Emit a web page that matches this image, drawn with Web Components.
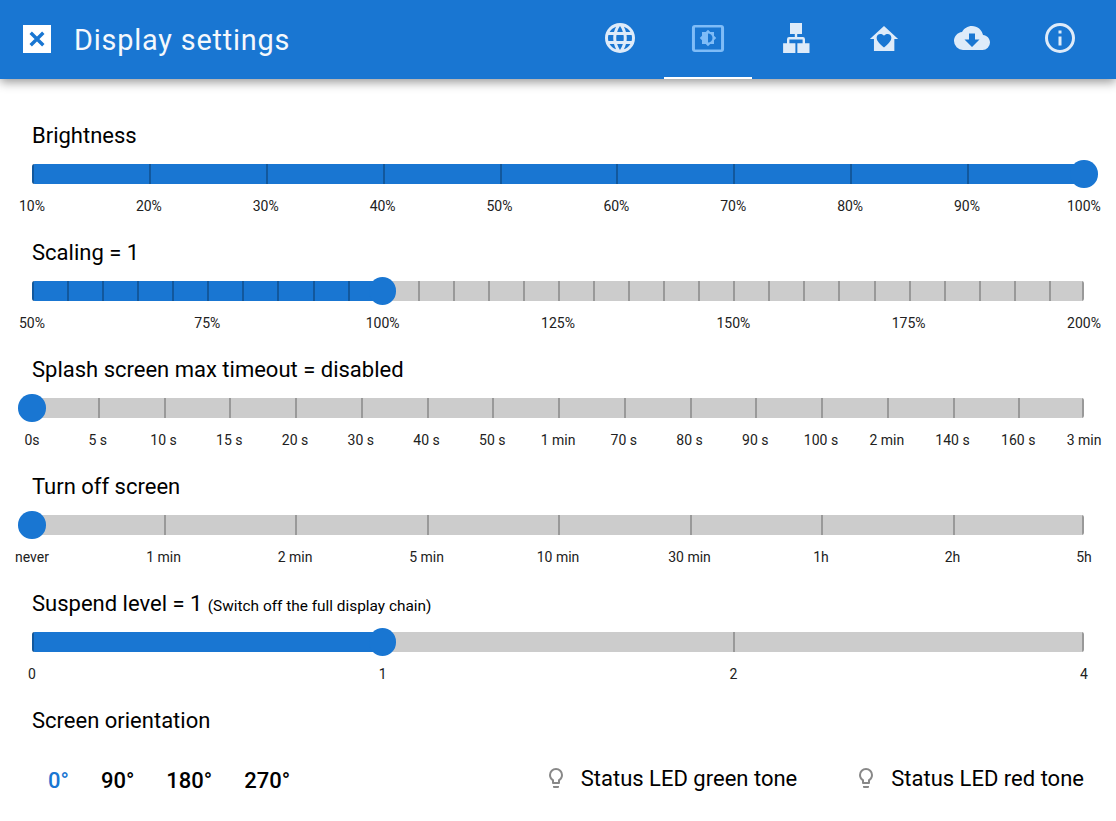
<!DOCTYPE html>
<html>
<head>
<meta charset="utf-8">
<title>Display settings</title>
<style>
  html, body { margin: 0; padding: 0; background: #fff; }
  body { font-family: Roboto, "Liberation Sans", sans-serif; color: #000; }
</style>
</head>
<body>
<settings-page>
  <top-bar slot="bar" heading="Display settings"></top-bar>

  <range-slider title-text="Brightness" value="9" ticks="9"
    labels="10%,20%,30%,40%,50%,60%,70%,80%,90%,100%"></range-slider>

  <range-slider title-text="Scaling = 1" value="10" ticks="30"
    labels="50%,75%,100%,125%,150%,175%,200%"></range-slider>

  <range-slider title-text="Splash screen max timeout = disabled" value="0" ticks="16"
    labels="0s,5 s,10 s,15 s,20 s,30 s,40 s,50 s,1 min,70 s,80 s,90 s,100 s,2 min,140 s,160 s,3 min"></range-slider>

  <range-slider title-text="Turn off screen" value="0" ticks="8"
    labels="never,1 min,2 min,5 min,10 min,30 min,1h,2h,5h"></range-slider>

  <range-slider title-text="Suspend level = 1" note="(Switch off the full display chain)" value="1" ticks="3"
    labels="0,1,2,4"></range-slider>

  <bottom-row></bottom-row>
</settings-page>

<script>
const ICONS = {
  web: `<path d="M16.36,14C16.44,13.34 16.5,12.68 16.5,12C16.5,11.32 16.44,10.66 16.36,10H19.74C19.9,10.64 20,11.31 20,12C20,12.69 19.9,13.36 19.74,14M14.59,19.56C15.19,18.45 15.65,17.25 15.97,16H18.92C17.96,17.65 16.43,18.93 14.59,19.56M14.34,14H9.66C9.56,13.34 9.5,12.68 9.5,12C9.5,11.32 9.56,10.65 9.66,10H14.34C14.43,10.65 14.5,11.32 14.5,12C14.5,12.68 14.43,13.34 14.34,14M12,19.96C11.17,18.76 10.5,17.43 10.09,16H13.91C13.5,17.43 12.83,18.76 12,19.96M8,8H5.08C6.03,6.34 7.57,5.06 9.4,4.44C8.8,5.55 8.35,6.75 8,8M5.08,16H8C8.35,17.25 8.8,18.45 9.4,19.56C7.57,18.93 6.03,17.65 5.08,16M4.26,14C4.1,13.36 4,12.69 4,12C4,11.31 4.1,10.64 4.26,10H7.64C7.56,10.66 7.5,11.32 7.5,12C7.5,12.68 7.56,13.34 7.64,14M12,4.03C12.83,5.23 13.5,6.57 13.91,8H10.09C10.5,6.57 11.17,5.23 12,4.03M18.92,8H15.97C15.65,6.75 15.19,5.55 14.59,4.44C16.43,5.07 17.96,6.34 18.92,8M12,2C6.47,2 2,6.5 2,12A10,10 0 0,0 12,22A10,10 0 0,0 22,12A10,10 0 0,0 12,2Z"/>`,
  cloud: `<path d="M17,13L12,18L7,13H10V9H14V13M19.35,10.03C18.67,6.59 15.64,4 12,4C9.11,4 6.6,5.64 5.35,8.03C2.34,8.36 0,10.9 0,14A6,6 0 0,0 6,20H19A5,5 0 0,0 24,15C24,12.36 21.95,10.22 19.35,10.03Z"/>`,
  info: `<path d="M11,9H13V7H11M12,20C7.59,20 4,16.41 4,12C4,7.59 7.59,4 12,4C16.41,4 20,7.59 20,12C20,16.41 16.41,20 12,20M12,2A10,10 0 0,0 2,12A10,10 0 0,0 12,22A10,10 0 0,0 22,12A10,10 0 0,0 12,2M11,17H13V11H11V17Z"/>`,
  bulb: `<path d="M12,2A7,7 0 0,0 5,9C5,11.38 6.19,13.47 8,14.74V17A1,1 0 0,0 9,18H15A1,1 0 0,0 16,17V14.74C17.81,13.47 19,11.38 19,9A7,7 0 0,0 12,2M9,21A1,1 0 0,0 10,22H14A1,1 0 0,0 15,21V20H9V21M12,4A5,5 0 0,1 17,9C17,10.64 16.2,12.13 14.86,13.07L14,13.67V16H10V13.67L9.14,13.07C7.8,12.13 7,10.64 7,9A5,5 0 0,1 12,4Z"/>`
};

class settings_page extends HTMLElement {
  connectedCallback() {
    let root = this.attachShadow({ mode: "open" });
    root.innerHTML = `<style>
      :host { display: block; }
      main { display: flex; flex-direction: column; padding: 42px 32px 0; gap: 0; }
    </style>
    <slot name="bar"></slot>
    <main><slot></slot></main>`;
  }
}

class top_bar extends HTMLElement {
  connectedCallback() {
    let root = this.attachShadow({ mode: "open" });
    let tab = (inner, active) => `<div class="tab ${active ? "on" : ""}"><svg viewBox="0 0 24 24" width="36" height="36">${inner}</svg></div>`;
    root.innerHTML = `<style>
      :host { display: block; position: relative; }
      header {
        height: 79px; background: #1976d2; color: #fff; display: flex; align-items: stretch;
        box-shadow: 0 3px 10px rgba(0,0,0,.42); padding: 0 12px 0 23px; box-sizing: border-box;
      }
      .close { align-self: center; width: 28px; height: 28px; margin-top: -1px; flex: none; }
      h1 {
        flex: 1; margin: 0 0 0 23px; align-self: center; font: 400 28.8px/36px Roboto, sans-serif;
        letter-spacing: .82px; color: #f4f8fc;
      }
      nav { display: flex; }
      .tab {
        width: 88px; display: flex; align-items: center; justify-content: center; box-sizing: border-box;
        padding-bottom: 2px; fill: #deebf9; border-bottom: 2px solid transparent;
      }
      .tab.on { fill: #7fbcf7; border-bottom-color: #fff; }
    </style>
    <header>
      <svg class="close" viewBox="0 0 28 28">
        <rect width="28" height="28" fill="#fff"/>
        <path d="M7.7 7.7L20.3 20.3M20.3 7.7L7.7 20.3" stroke="#1976d2" stroke-width="3.4" fill="none"/>
      </svg>
      <h1>${this.getAttribute("heading")}</h1>
      <nav>
        ${tab(ICONS.web)}
        ${tab(`<path fill-rule="evenodd" d="M3.3 3.3H20.7A2 2 0 0 1 22.7 5.3V19.3A2 2 0 0 1 20.7 21.3H3.3A2 2 0 0 1 1.3 19.3V5.3A2 2 0 0 1 3.3 3.3ZM3.3 5V19.6H20.7V5ZM8 16H10.5L12 17.5L13.5 16H16V13.5L17.5 12L16 10.5V8H13.5L12 6.5L10.5 8H8V10.5L6.5 12L8 13.5ZM12 9A3 3 0 0 1 12 15Z"/>`, true)}
        ${tab(`<path d="M8 2H16V9.3H8ZM11.2 9.3H12.8V11.4H16.6A1.4 1.4 0 0 1 18 12.8V15.5H16.4V13H7.6V15.5H6V12.8A1.4 1.4 0 0 1 7.4 11.4H11.2ZM3.4 15.5H11.6V22H3.4ZM12.9 15.5H21V22H12.9Z"/>`)}
        ${tab(`<path fill-rule="evenodd" d="M12 4L2.6 12.6H5.3V20.6H18.9V12.6H21.4ZM12 18.4C9.2 15.8 7.1 14 7.1 11.8C7.1 10.4 8.2 9.4 9.6 9.4C10.5 9.4 11.4 9.8 12 10.5C12.6 9.8 13.5 9.4 14.4 9.4C15.8 9.4 16.9 10.4 16.9 11.8C16.9 14 14.8 15.8 12 18.4Z"/>`)}
        ${tab(ICONS.cloud)}
        ${tab(ICONS.info)}
      </nav>
    </header>`;
  }
}

class range_slider extends HTMLElement {
  connectedCallback() {
    let root = this.attachShadow({ mode: "open" });
    let ticks = +this.getAttribute("ticks");
    let value = +this.getAttribute("value");
    let labels = this.getAttribute("labels").split(",");
    let note = this.getAttribute("note");
    let pct = value / ticks * 100;
    let marks = "";
    for (let i = 0; i <= ticks; i++) marks += "<i></i>";
    root.innerHTML = `<style>
      :host { display: block; height: 117px; }
      .title { font-size: 22px; line-height: 28px; height: 28px; margin: 1px 0 14px; white-space: nowrap; color: #000; }
      .title small { font-size: 15.4px; }
      .track { position: relative; height: 20px; background: #ccc; border-radius: 3px; }
      .fill { position: absolute; left: 0; top: 0; bottom: 0; background: #1976d2; border-radius: 3px 0 0 3px; }
      /* 2px wider than the track so the step is track width / ticks, last tick pulled back inside */
      .marks { position: absolute; inset: 0 -2px 0 0; display: flex; justify-content: space-between; }
      .marks i { width: 2px; background: rgba(0,0,0,.25); }
      .marks i:first-child { border-radius: 2px 0 0 2px; }
      .marks i:last-child { transform: translateX(-2px); border-radius: 0 2px 2px 0; }
      .thumb {
        position: absolute; top: 50%; width: 27.4px; height: 27.4px; margin: -13.7px 0 0 -13.7px;
        background: #1976d2; border-radius: 50%;
      }
      .labels { display: flex; justify-content: space-between; margin-top: 14px; }
      .labels span {
        width: 0; display: flex; justify-content: center; white-space: nowrap;
        font-size: 14px; line-height: 16px; color: #212121;
      }
    </style>
    <div class="title">${this.getAttribute("title-text")}${note ? ` <small>${note}</small>` : ""}</div>
    <div class="track">
      <div class="fill" style="width:${pct}%"></div>
      <div class="marks">${marks}</div>
      <div class="thumb" style="left:${pct}%"></div>
    </div>
    <div class="labels">${labels.map(l => `<span>${l}</span>`).join("")}</div>`;
  }
}

class bottom_row extends HTMLElement {
  connectedCallback() {
    let root = this.attachShadow({ mode: "open" });
    let led = text => `<div class="led"><svg viewBox="0 0 24 24" width="24" height="24" fill="#888">${ICONS.bulb}</svg><span>${text}</span></div>`;
    root.innerHTML = `<style>
      :host { display: block; }
      .title { font-size: 22px; line-height: 28px; height: 28px; margin-top: 1px; }
      .row { display: flex; align-items: center; margin-top: 27px; height: 36px; }
      .angles { display: flex; flex: 1; padding-left: 16px; gap: 32px; font-size: 22px; font-weight: 500; }
      .angles .on { color: #1976d2; }
      .leds { display: flex; gap: 57px; }
      .led { display: flex; align-items: center; gap: 13px; font-size: 22px; margin-top: -4px; }
    </style>
    <div class="title">Screen orientation</div>
    <div class="row">
      <div class="angles"><span class="on">0°</span><span>90°</span><span>180°</span><span>270°</span></div>
      <div class="leds">${led("Status LED green tone")}${led("Status LED red tone")}</div>
    </div>`;
  }
}

window.customElements.define("settings-page", settings_page);
window.customElements.define("top-bar", top_bar);
window.customElements.define("range-slider", range_slider);
window.customElements.define("bottom-row", bottom_row);
</script>
</body>
</html>
